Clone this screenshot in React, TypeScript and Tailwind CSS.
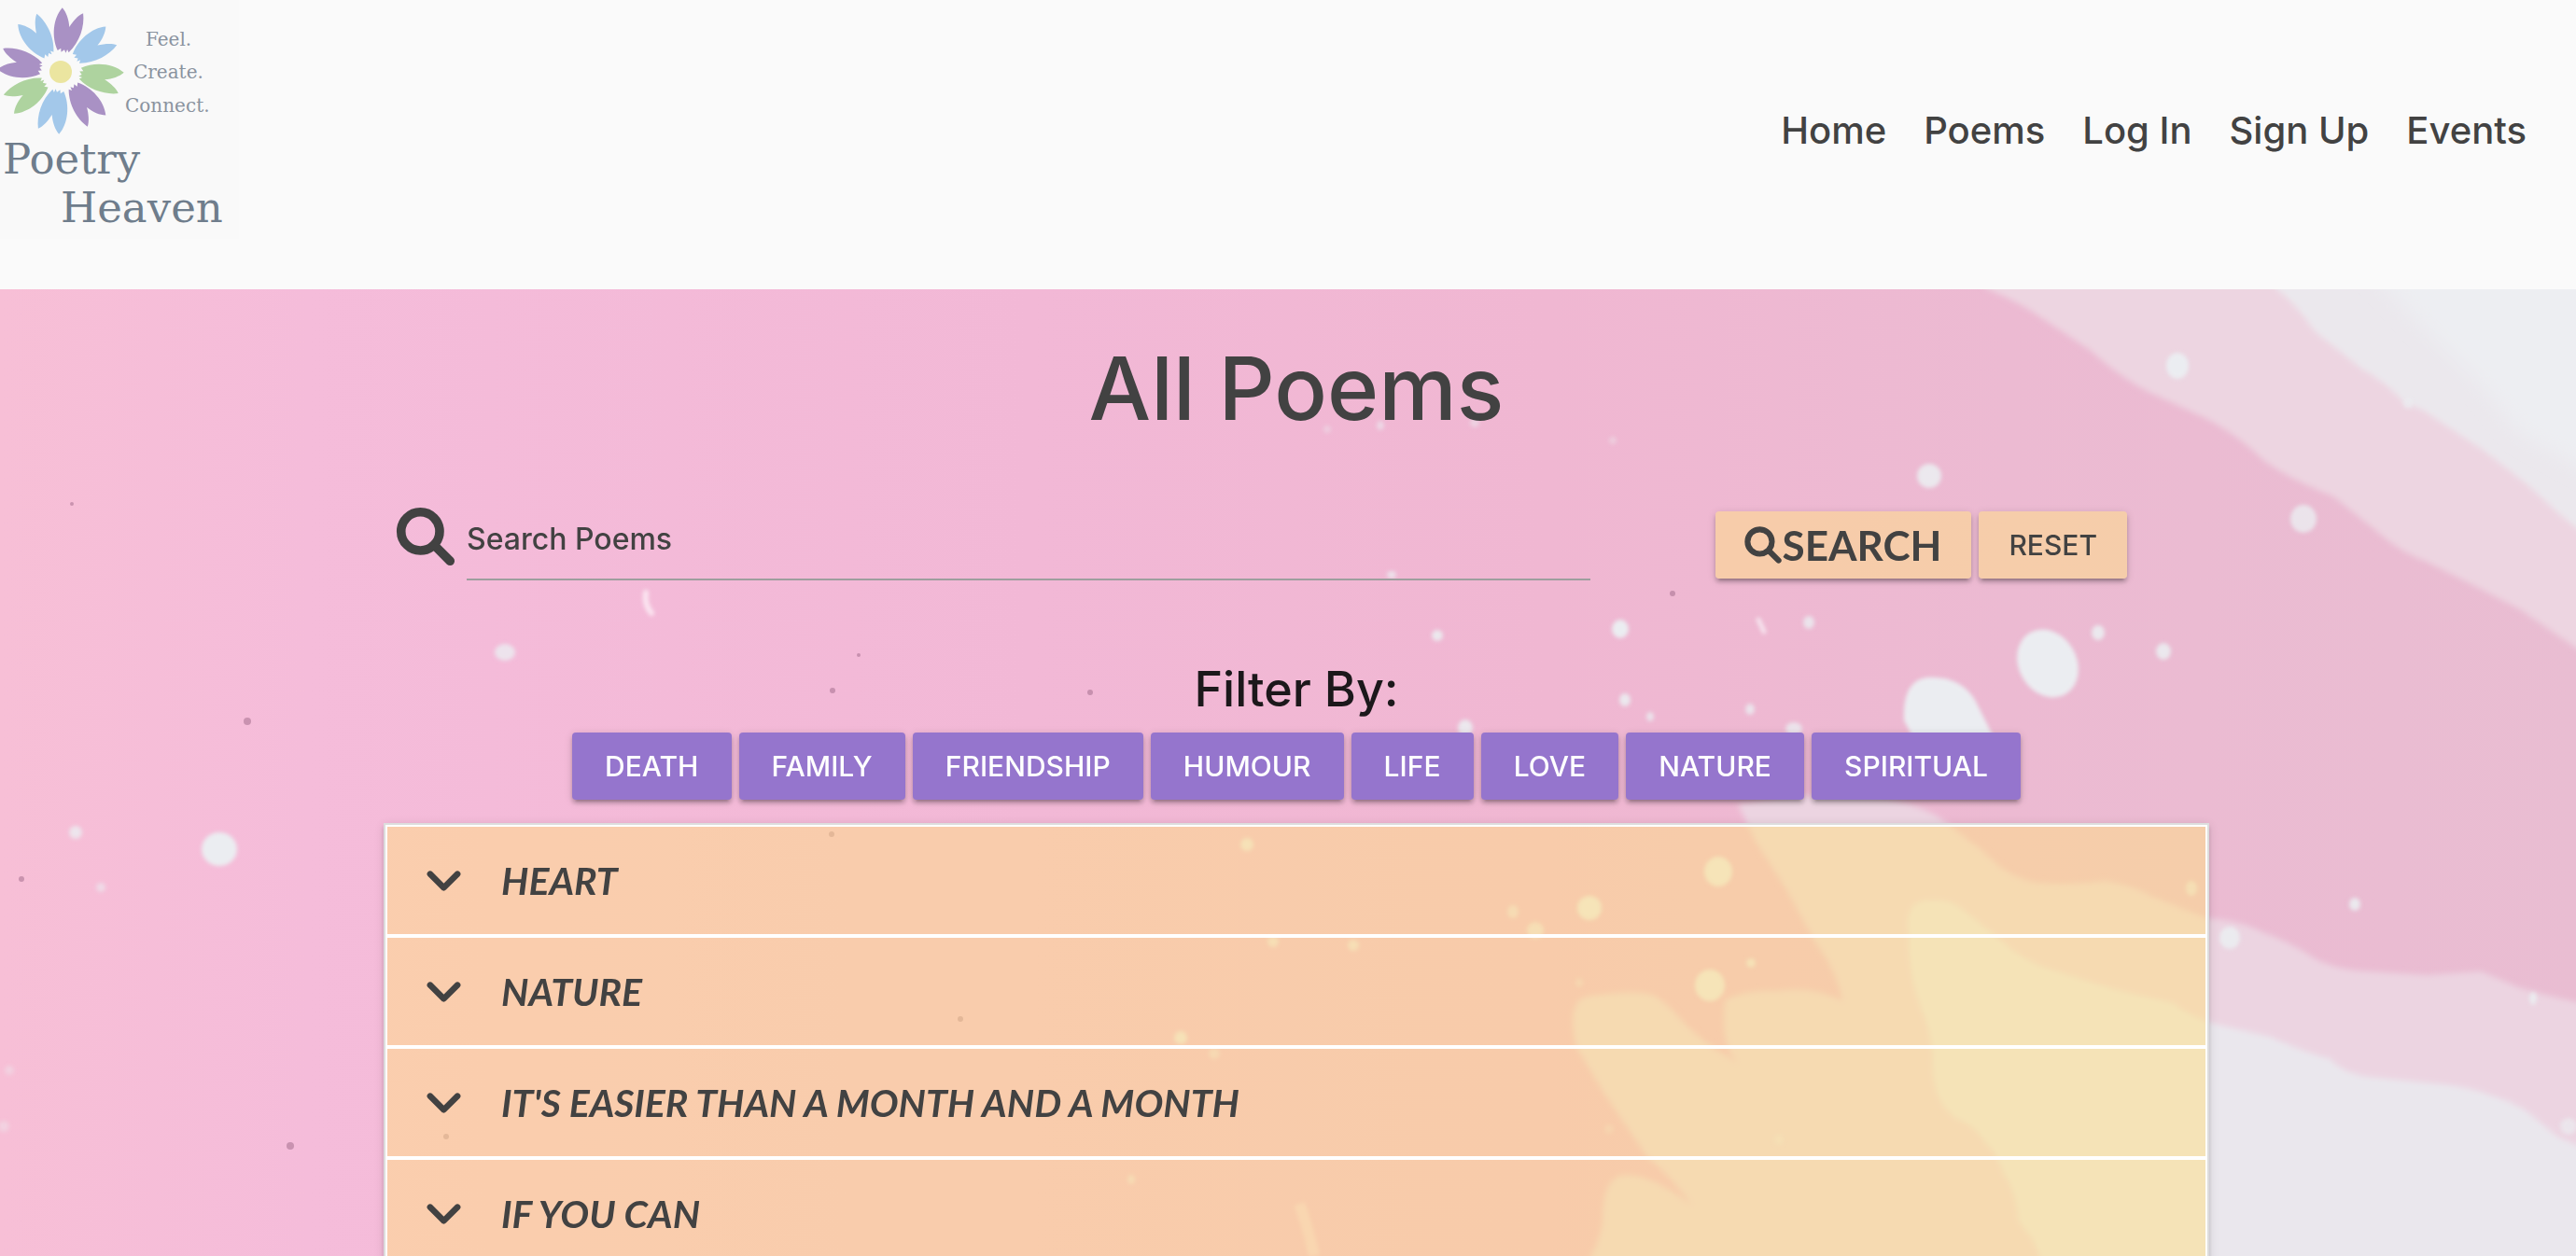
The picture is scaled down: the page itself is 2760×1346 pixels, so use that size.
import { useState } from "react";
import { FaChevronDown, FaMagnifyingGlass } from "react-icons/fa6";

const links = ["Home", "Poems", "Log In", "Sign Up", "Events"];
const filters = ["DEATH", "FAMILY", "FRIENDSHIP", "HUMOUR", "LIFE", "LOVE", "NATURE", "SPIRITUAL"];
const poems = ["HEART", "NATURE", "IT'S EASIER THAN A MONTH AND A MONTH", "IF YOU CAN"];

const petals: [number, string][] = [
  [10, "#a991c4"],
  [54, "#a3c8ea"],
  [100, "#aed39f"],
  [143, "#a991c4"],
  [190, "#a3c8ea"],
  [236, "#aed39f"],
  [280, "#a991c4"],
  [326, "#a3c8ea"],
];

// x, y, horizontal radius, vertical radius, opacity
const spots: [number, number, number, number, number][] = [
  [2333, 392, 12, 14, 1],
  [2067, 510, 13, 13, 0.9],
  [2468, 556, 14, 15, 0.8],
  [1736, 674, 9, 10, 1],
  [1938, 667, 6, 7, 0.8],
  [2248, 678, 7, 8, 0.9],
  [2318, 698, 8, 9, 0.9],
  [1741, 750, 6, 7, 0.9],
  [1768, 768, 4, 5, 0.8],
  [1875, 760, 5, 6, 0.8],
  [1540, 681, 6, 6, 0.9],
  [1491, 616, 5, 4, 0.8],
  [1570, 780, 8, 9, 0.9],
  [1922, 781, 9, 7, 0.8],
  [541, 699, 11, 9, 0.8],
  [81, 892, 7, 7, 0.8],
  [235, 910, 19, 18, 1],
  [108, 951, 5, 5, 0.6],
  [10, 1147, 5, 5, 0.4],
  [4, 1207, 6, 6, 0.4],
  [2389, 1005, 11, 12, 0.9],
  [2523, 969, 6, 7, 0.9],
  [2714, 1070, 4, 7, 0.9],
  [2752, 1207, 9, 9, 0.7],
  [2348, 952, 6, 8, 0.7],
  [2580, 432, 5, 6, 0.7],
  [1841, 934, 15, 16, 0.9],
  [1703, 973, 13, 13, 0.9],
  [1621, 977, 6, 7, 0.6],
  [1645, 997, 9, 9, 0.7],
  [1832, 1056, 16, 17, 0.9],
  [1876, 1032, 5, 5, 0.8],
  [1692, 1053, 4, 5, 0.4],
  [1336, 905, 7, 7, 0.8],
  [1364, 1009, 6, 6, 0.7],
  [1450, 1013, 6, 6, 0.7],
  [1265, 1112, 7, 7, 0.8],
  [1301, 1129, 6, 6, 0.5],
  [1724, 1210, 5, 5, 0.3],
  [1906, 1221, 5, 6, 0.4],
  [1212, 1264, 4, 5, 0.6],
  [1479, 456, 4, 5, 0.6],
  [1422, 460, 4, 4, 0.4],
  [1580, 453, 5, 5, 0.5],
  [1728, 472, 4, 4, 0.4],
];

const specks: [number, number, number][] = [
  [265, 773, 4],
  [311, 1228, 4],
  [23, 942, 3],
  [892, 740, 3],
  [920, 702, 2],
  [1029, 1092, 3],
  [891, 894, 3],
  [478, 1218, 3],
  [1168, 742, 3],
  [77, 540, 2],
  [1792, 636, 3],
];

function Backdrop() {
  return (
    <svg
      aria-hidden="true"
      className="absolute inset-0 h-full w-full"
      viewBox="0 310 2760 1036"
      preserveAspectRatio="xMidYMid slice"
    >
      <defs>
        <linearGradient id="base" x1="0" y1="0" x2="1" y2="0">
          <stop offset="0" stopColor="#f7bfd6" />
          <stop offset="0.12" stopColor="#f5bcda" />
          <stop offset="0.4" stopColor="#f2b8d6" />
          <stop offset="0.6" stopColor="#f0b7d2" />
          <stop offset="0.78" stopColor="#ecbad2" />
          <stop offset="1" stopColor="#e9bdd2" />
        </linearGradient>
        <filter id="soft" x="-5%" y="-5%" width="110%" height="110%">
          <feGaussianBlur stdDeviation="3" />
        </filter>
        <filter id="softer" x="-5%" y="-5%" width="110%" height="110%">
          <feGaussianBlur stdDeviation="10" />
        </filter>
        <filter id="dot" filterUnits="userSpaceOnUse" x="0" y="300" width="2760" height="1060">
          <feGaussianBlur stdDeviation="2" />
        </filter>
      </defs>
      <rect x="0" y="310" width="2760" height="1036" fill="url(#base)" />
      <g filter="url(#soft)">
        <path
          fill="#edd5e1"
          d="M2110 290 L2130 310 Q2160 322 2185 339 L2239 375 Q2270 403 2300 419 L2365 449 Q2400 468 2425 493 Q2450 512 2500 532 L2545 568 Q2570 591 2600 602 L2640 622 L2700 653 L2790 715 L2790 290 Z"
        />
        <path
          fill="#ebe8ed"
          d="M2420 290 L2440 310 Q2462 328 2480 355 L2530 395 Q2560 412 2578 434 Q2590 434 2610 449 L2660 482 Q2690 505 2712 523 L2740 549 L2790 590 L2790 290 Z"
        />
        <path
          fill="#ecd4e1"
          d="M1862 862 Q1940 846 2022 856 Q2060 864 2079 877 L2127 914 Q2150 940 2183 946 Q2220 949 2256 944 Q2285 949 2304 960 L2364 984 Q2400 986 2424 999 Q2455 1010 2481 1028 Q2505 1040 2537 1041 L2601 1045 L2658 1041 Q2675 1048 2698 1058 Q2730 1068 2790 1080 L2790 1370 L1690 1370 Q1712 1340 1717 1310 Q1716 1262 1740 1259 Q1770 1258 1813 1292 Q1790 1260 1765 1240 L1717 1169 L1689 1122 Q1676 1068 1706 1067 Q1756 1060 1773 1067 Q1785 1075 1797 1088 Q1820 1115 1862 1139 Q1842 1118 1848 1072 Q1870 1060 1902 1062 Q1945 1056 1974 1073 Q1968 1040 1945 1010 L1915 955 L1880 900 Z"
        />
        <path
          fill="#eae7ed"
          d="M2045 1000 Q2040 968 2063 965 Q2090 962 2103 975 L2143 1007 Q2165 1028 2191 1037 L2264 1060 L2328 1075 Q2350 1092 2376 1098 L2432 1111 Q2470 1128 2497 1135 Q2510 1150 2537 1154 L2617 1162 Q2650 1166 2666 1173 Q2690 1180 2706 1190 L2740 1218 L2790 1240 L2790 1370 L2191 1370 Q2185 1330 2163 1310 Q2160 1275 2147 1258 Q2140 1236 2127 1224 Q2115 1205 2095 1198 Q2068 1178 2071 1130 Q2068 1100 2058 1080 Q2044 1040 2045 1000 Z"
        />
      </g>
      <path
        filter="url(#softer)"
        fill="#edeef2"
        d="M2540 290 L2600 355 L2660 415 L2700 465 L2790 515 L2790 290 Z"
      />
      <g filter="url(#dot)" fill="#ebedf1">
        <ellipse cx="2194" cy="711" rx="31" ry="38" transform="rotate(-30 2194 711)" />
        <path d="M2040 772 Q2038 730 2064 726 Q2100 724 2116 750 L2136 790 L2130 810 L2060 810 Z" />
        {spots.map(([x, y, rx, ry, o]) => (
          <ellipse key={`${x}-${y}`} cx={x} cy={y} rx={rx} ry={ry} opacity={o} />
        ))}
        <path d="M692 635 Q690 648 698 657" fill="none" stroke="#fbe6f1" strokeWidth="6" strokeLinecap="round" />
        <path d="M1884 664 L1890 677" stroke="#f6e4ee" strokeWidth="5" strokeLinecap="round" />
        <path
          d="M1392 1290 Q1400 1310 1408 1346"
          fill="none"
          stroke="#f4dbe6"
          strokeWidth="12"
          opacity="0.6"
        />
      </g>
      <g fill="#a4708e" opacity="0.55">
        {specks.map(([x, y, r]) => (
          <circle key={`${x}-${y}`} cx={x} cy={y} r={r} />
        ))}
      </g>
    </svg>
  );
}

function Logo() {
  return (
    <svg
      viewBox="0 0 256 256"
      role="img"
      aria-label="Poetry Heaven"
      className="h-64 w-64 bg-[#f9f9f9] font-['DejaVu_Serif',serif] font-normal"
    >
      <g transform="translate(65 76)">
        {petals.map(([angle, fill]) => (
          <path
            key={angle}
            transform={`rotate(${angle})`}
            fill={fill}
            d="M0 -23 L-3 -20 L-4 -24 L-7 -21 C-16 -34 -18 -54 -10 -67 C-5 -63 -1 -56 1 -48 C4 -55 8 -62 13 -65 C17 -52 15 -34 5 -21 L3 -24 L2 -20 Z"
          />
        ))}
        <circle cx="0" cy="1" r="12" fill="#ebe5a0" />
      </g>
      <g fill="#8a939f" fontSize="20">
        <text x="156" y="49">Feel.</text>
        <text x="143" y="84">Create.</text>
        <text x="134" y="120">Connect.</text>
      </g>
      <g fill="#6f7d8c" fontSize="45">
        <text x="3" y="186">Poetry</text>
        <text x="65" y="238">Heaven</text>
      </g>
    </svg>
  );
}

export default function App() {
  const [query, setQuery] = useState("");
  return (
    <div className="flex h-screen flex-col overflow-hidden font-['Inter',sans-serif] font-medium text-[#424242]">
      <header className="flex h-[310px] shrink-0 items-start justify-between bg-[#fafafa]">
        <a href="#home" aria-label="Poetry Heaven home">
          <Logo />
        </a>
        <nav className="mr-[53px] mt-[112px]">
          <ul className="flex gap-10 text-[40px] leading-[56px]">
            {links.map((l) => (
              <li key={l}>
                <a href={`#${l}`}>{l}</a>
              </li>
            ))}
          </ul>
        </nav>
      </header>

      <main className="relative min-h-0 flex-1 overflow-hidden">
        <Backdrop />
        <div className="relative pl-[411px] pr-[393px]">
          <h1 className="pt-[58px] text-center text-[94px] leading-[96px]">All Poems</h1>

          <form className="mt-[74px] flex h-[84px] items-end pl-[15px] pr-[88px]" onSubmit={(e) => e.preventDefault()}>
            <FaMagnifyingGlass
              stroke="currentColor"
              strokeWidth="18"
              className="mb-[17px] mr-[14px] h-[60px] w-[60px] shrink-0 overflow-visible"
            />
            <input
              type="text"
              aria-label="Search Poems"
              placeholder="Search Poems"
              value={query}
              onChange={(e) => setQuery(e.target.value)}
              className="h-[84px] min-w-0 flex-1 border-b-2 border-[#9e9e9e] bg-transparent pb-1 text-[32px] outline-none placeholder:text-[#424242] placeholder:opacity-100"
            />
            <div className="mb-0.5 ml-[134px] flex gap-2">
              <button
                type="submit"
                className="flex h-[72px] items-center gap-[2px] rounded-[4px] bg-[#ffe082]/50 px-8 shadow-[0_4px_4px_rgba(0,0,0,0.18),0_6px_2px_-4px_rgba(0,0,0,0.14),0_2px_10px_rgba(0,0,0,0.14)]"
              >
                <FaMagnifyingGlass
                  stroke="currentColor"
                  strokeWidth="18"
                  className="h-[38px] w-[38px] overflow-visible"
                />
                <span className="font-['Lato',sans-serif] text-[44px] font-bold leading-none">SEARCH</span>
              </button>
              <button
                type="reset"
                onClick={() => setQuery("")}
                className="h-[72px] rounded-[4px] bg-[#ffe082]/50 px-8 text-[30px] shadow-[0_4px_4px_rgba(0,0,0,0.18),0_6px_2px_-4px_rgba(0,0,0,0.14),0_2px_10px_rgba(0,0,0,0.14)]"
              >
                RESET
              </button>
            </div>
          </form>

          <h2 className="mt-[87px] text-center text-[52px] leading-[60px] text-[#1c181b]">Filter By:</h2>
          <div className="mx-auto mt-4 flex max-w-[1552px] gap-2">
            {filters.map((f) => (
              <button
                key={f}
                type="button"
                className="h-[72px] grow rounded-[4px] bg-[#9575cd] text-[30px] text-white shadow-[0_4px_4px_rgba(0,0,0,0.18),0_6px_2px_-4px_rgba(0,0,0,0.14),0_2px_10px_rgba(0,0,0,0.14)]"
              >
                {f}
              </button>
            ))}
          </div>

          <ul className="mt-[25px] border-2 border-[#dddddd] shadow-[0_4px_4px_rgba(0,0,0,0.14),0_2px_10px_rgba(0,0,0,0.12)]">
            {poems.map((p) => (
              <li key={p}>
                <button
                  type="button"
                  aria-expanded="false"
                  className="flex h-[119px] w-full items-center gap-7.5 border-2 border-white bg-[#ffe082]/50 bg-clip-padding pl-7 text-left"
                >
                  <span className="flex w-16 shrink-0 justify-center">
                    <FaChevronDown stroke="currentColor" strokeWidth="22" className="mb-1 h-[39px] w-[39px]" />
                  </span>
                  <span className="font-['Lato',sans-serif] text-[41px] font-bold italic leading-[48px]">{p}</span>
                </button>
              </li>
            ))}
          </ul>
        </div>
      </main>
    </div>
  );
}
